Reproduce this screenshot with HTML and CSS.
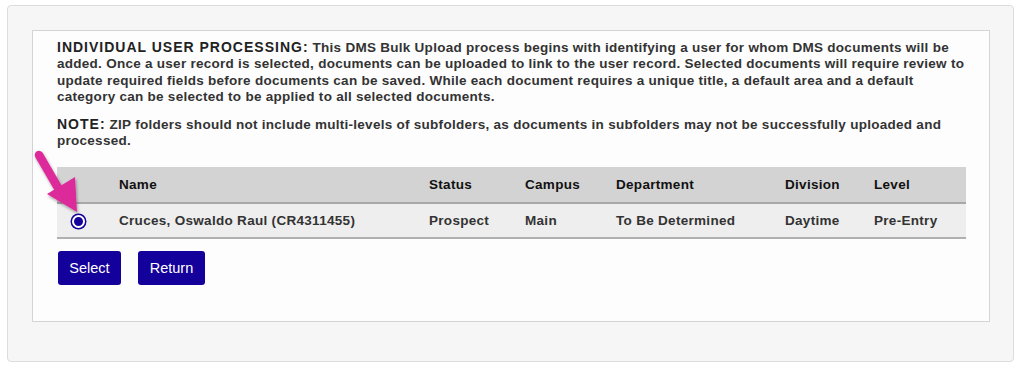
FILE: index.html
```html
<!DOCTYPE html>
<html>
<head>
<meta charset="utf-8">
<link rel="stylesheet" href="styles.css">
</head>
<body>
<div class="outer">
  <div class="inner">
    <p class="intro"><span class="lead">INDIVIDUAL USER PROCESSING:</span> This DMS Bulk Upload process begins with identifying a user for whom DMS documents will be added. Once a user record is selected, documents can be uploaded to link to the user record. Selected documents will require review to update required fields before documents can be saved. While each document requires a unique title, a default area and a default category can be selected to be applied to all selected documents.</p>
    <p class="note"><span class="lead">NOTE:</span> ZIP folders should not include multi-levels of subfolders, as documents in subfolders may not be successfully uploaded and processed.</p>
    <div class="table-wrap">
      <table class="users">
        <thead>
          <tr>
            <th class="c-radio"></th>
            <th class="c-name">Name</th>
            <th class="c-status">Status</th>
            <th class="c-campus">Campus</th>
            <th class="c-dept">Department</th>
            <th class="c-div">Division</th>
            <th class="c-level">Level</th>
          </tr>
        </thead>
        <tbody>
          <tr>
            <td class="c-radio"><span class="radio"></span></td>
            <td>Cruces, Oswaldo Raul (CR4311455)</td>
            <td>Prospect</td>
            <td>Main</td>
            <td>To Be Determined</td>
            <td>Daytime</td>
            <td>Pre-Entry</td>
          </tr>
        </tbody>
      </table>
      <svg class="arrow" width="60" height="80" viewBox="0 0 60 80">
        <defs>
          <filter id="sh" x="-30%" y="-30%" width="160%" height="160%">
            <feDropShadow dx="1" dy="2" stdDeviation="1.5" flood-color="#000" flood-opacity="0.35"/>
          </filter>
        </defs>
        <g filter="url(#sh)">
          <line x1="8" y1="8" x2="30" y2="46" stroke="#dd2a9b" stroke-width="8.5" stroke-linecap="round"/>
          <polygon points="16,47 44,30 46,65" fill="#dd2a9b"/>
        </g>
      </svg>
    </div>
    <div class="actions">
      <button class="btn">Select</button>
      <button class="btn">Return</button>
    </div>
  </div>
</div>
</body>
</html>
```

FILE: styles.css
```css
html, body {
  margin: 0;
  padding: 0;
  background: #ffffff;
}
body {
  padding: 5px 8px 8px 7px;
  font-family: "Liberation Sans", Arial, sans-serif;
}
.outer {
  width: 1007px;
  height: 357px;
  box-sizing: border-box;
  background: #f6f6f6;
  border: 1px solid #dcdcdc;
  border-radius: 4px;
  padding: 24px 23px 0 24px;
}
.inner {
  height: 292px;
  box-sizing: border-box;
  background: #fdfdfd;
  border: 1px solid #d4d4d4;
  padding: 8px 23px 0 24px;
}
p {
  margin: 0;
  font-size: 13.5px;
  letter-spacing: 0.27px;
  font-weight: bold;
  line-height: 16.4px;
  color: #333333;
}
.lead {
  font-size: 14px;
  letter-spacing: 1px;
  color: #222222;
}
.note {
  margin-top: 10px;
}
.table-wrap {
  position: relative;
  margin-top: 18px;
}
.users {
  width: 100%;
  border-collapse: collapse;
  font-size: 13.5px;
  letter-spacing: 0.3px;
  font-weight: bold;
}
.users th {
  text-align: left;
  background: #d3d3d3;
  color: #111111;
  height: 35px;
  padding: 0;
  border-bottom: 2px solid #a8a8a8;
}
.users td {
  background: #eeeeee;
  color: #333333;
  height: 33px;
  padding: 0;
  border-bottom: 2px solid #b0b0b0;
}
.c-radio { width: 62px; }
.c-name { width: 310px; }
.c-status { width: 96px; }
.c-campus { width: 91px; }
.c-dept { width: 169px; }
.c-div { width: 89px; }
.users td.c-radio {
  padding-left: 15px;
  box-sizing: border-box;
}
.radio {
  display: block;
  width: 9px;
  height: 9px;
  border-radius: 50%;
  background: #14009a;
  border: 2px solid #ffffff;
  box-shadow: 0 0 0 1.5px #14009a;
  margin-top: 1px;
}
.arrow {
  position: absolute;
  left: -26px;
  top: -20px;
}
.actions {
  display: flex;
  gap: 17px;
  margin-top: 12px;
  padding-left: 1px;
}
.btn {
  background: #14009a;
  color: #ffffff;
  border: none;
  border-radius: 3px;
  height: 34px;
  padding: 0;
  font-family: "Liberation Sans", Arial, sans-serif;
  font-size: 14.5px;
}
.btn:first-child { width: 63px; }
.btn:last-child { width: 67px; }
```
